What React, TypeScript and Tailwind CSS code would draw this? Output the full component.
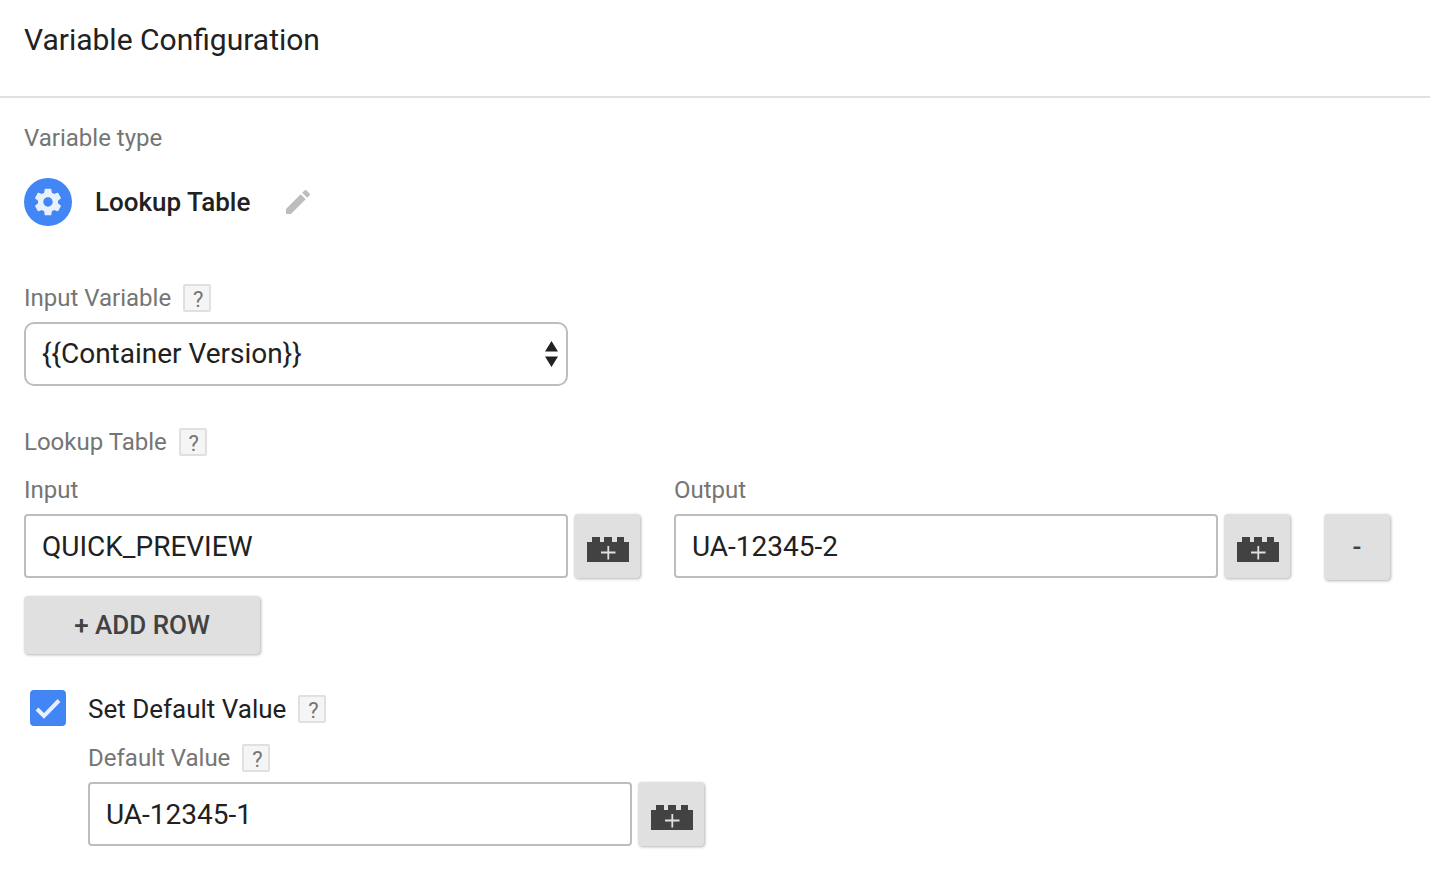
import { useState } from "react";

type Row = {
  id: number;
  input: string;
  output: string;
};

type TextFieldProperties = {
  id: string;
  value: string;
  label?: string;
  onChange: (value: string) => void;
};

const HelpBadge = ({ topic }: { topic: string }) => (
  <button
    type="button"
    aria-label={`Help: ${topic}`}
    className="flex h-7 w-7 shrink-0 items-center justify-center rounded-xs border-2 border-[#e0e0e0] bg-[#f5f5f5] pt-1 pl-0.5 text-[22px] leading-none text-[#757575]"
  >
    ?
  </button>
);

const BrickIcon = () => (
  <svg width="42" height="25" viewBox="0 0 42 25" aria-hidden="true">
    <path
      d="M0 5h5V0h8v5h4V0h8v5h5V0h7v5h5v20H0z"
      fill="#424242"
    />
    <path d="M21.300 9v13.500M14 15.500h14.500" stroke="#e0e0e0" strokeWidth="1.800" />
  </svg>
);

const TextField = ({ id, value, label, onChange }: TextFieldProperties) => (
  <div className="flex items-start gap-1.5">
    <input
      id={id}
      type="text"
      value={value}
      aria-label={label}
      onChange={(event) => onChange(event.target.value)}
      className="h-16 min-w-0 flex-1 rounded-sm border-2 border-[#bdbdbd] bg-white px-4 text-[28px] text-[#212121] outline-none focus:border-[#4285f4]"
    />
    <button
      type="button"
      aria-label="Insert variable"
      className="flex h-16 w-[66px] shrink-0 items-center justify-center rounded-sm bg-[#e0e0e0] pt-[7px] pl-0.5 shadow-[1px_1px_3px_rgba(0,0,0,0.3)]"
    >
      <BrickIcon />
    </button>
  </div>
);

const App = () => {
  const [variable, setVariable] = useState("container-version");
  const [rows, setRows] = useState<Row[]>([
    { id: 1, input: "QUICK_PREVIEW", output: "UA-12345-2" },
  ]);
  const [hasDefault, setHasDefault] = useState(true);
  const [defaultValue, setDefaultValue] = useState("UA-12345-1");

  const updateRow = (id: number, changes: Partial<Row>) => {
    setRows(rows.map((row) => (row.id === id ? { ...row, ...changes } : row)));
  };

  const addRow = () => {
    setRows([...rows, { id: Date.now(), input: "", output: "" }]);
  };

  return (
    <main className="min-h-screen bg-white font-['Roboto',sans-serif] text-[24px] leading-8 text-[#757575]">
      <header className="border-b-2 border-[#e0e0e0] px-6 pt-6 pb-10">
        <h1 className="text-[30px] leading-8 text-[#212121]">
          Variable Configuration
        </h1>
      </header>

      <div className="pt-6 pr-10 pb-6 pl-6">
        <h2>Variable type</h2>
        <div className="mt-6 flex items-center">
          <span className="flex h-12 w-12 items-center justify-center rounded-full bg-[#4285f4]">
            <svg width="32" height="32" viewBox="0 0 24 24" aria-hidden="true">
              <path
                d="M19.43 12.98c.04-.32.07-.64.07-.98s-.03-.66-.07-.98l2.11-1.65c.19-.15.24-.42.12-.64l-2-3.46c-.12-.22-.39-.3-.61-.22l-2.49 1c-.52-.4-1.08-.73-1.69-.98l-.38-2.65C14.46 2.18 14.25 2 14 2h-4c-.25 0-.46.18-.49.42l-.38 2.65c-.61.25-1.17.59-1.69.98l-2.49-1c-.23-.09-.49 0-.61.22l-2 3.46c-.13.22-.07.49.12.64l2.11 1.65c-.04.32-.07.65-.07.98s.03.66.07.98l-2.11 1.65c-.19.15-.24.42-.12.64l2 3.46c.12.22.39.3.61.22l2.49-1c.52.4 1.08.73 1.69.98l.38 2.65c.03.24.24.42.49.42h4c.25 0 .46-.18.49-.42l.38-2.65c.61-.25 1.17-.59 1.69-.98l2.49 1c.23.09.49 0 .61-.22l2-3.46c.12-.22.07-.49-.12-.64l-2.11-1.65zM12 15.5c-1.93 0-3.5-1.57-3.5-3.5s1.57-3.5 3.5-3.5 3.5 1.57 3.5 3.5-1.57 3.5-3.5 3.5z"
                fill="#e8f0fe"
              />
            </svg>
          </span>
          <span className="ml-[23px] text-[26px] font-medium text-[#212121]">
            Lookup Table
          </span>
          <button type="button" aria-label="Edit variable type" className="ml-8">
            <svg width="32" height="32" viewBox="0 0 24 24" aria-hidden="true">
              <path
                d="M3 17.25V21h3.75L17.81 9.94l-3.75-3.75L3 17.25zM20.71 7.04c.39-.39.39-1.02 0-1.41l-2.34-2.34c-.39-.39-1.02-.39-1.41 0l-1.83 1.83 3.75 3.75 1.83-1.83z"
                fill="#bdbdbd"
              />
            </svg>
          </button>
        </div>

        <div className="mt-14 flex items-center gap-3">
          <label htmlFor="input-variable">Input Variable</label>
          <HelpBadge topic="Input Variable" />
        </div>
        <div className="relative mt-2 w-full max-w-[544px]">
          <select
            id="input-variable"
            value={variable}
            onChange={(event) => setVariable(event.target.value)}
            className="h-16 w-full appearance-none rounded-[10px] border-2 border-[#bdbdbd] bg-white px-4 text-[28px] text-[#212121] outline-none focus:border-[#4285f4]"
          >
            <option value="container-version">{"{{Container Version}}"}</option>
          </select>
          <svg
            width="13"
            height="26"
            viewBox="0 0 13 26"
            aria-hidden="true"
            className="pointer-events-none absolute top-[19px] right-2.5"
          >
            <path d="M6.500 0L13 10.500H0zM0 15.500h13L6.500 26z" fill="#212121" />
          </svg>
        </div>

        <div className="mt-10 flex items-center gap-3">
          <h2>Lookup Table</h2>
          <HelpBadge topic="Lookup Table" />
        </div>
        <div className="mt-4 grid grid-cols-[1fr_1fr_66px] items-start gap-x-[34px] gap-y-2">
          <label htmlFor="input-1">Input</label>
          <label htmlFor="output-1" className="col-span-2">
            Output
          </label>
          {rows.map((row, index) => (
            <div
              key={row.id}
              className="col-span-3 grid grid-cols-subgrid items-start"
            >
              <TextField
                id={`input-${index + 1}`}
                label={index > 0 ? "Input" : undefined}
                value={row.input}
                onChange={(input) => updateRow(row.id, { input })}
              />
              <TextField
                id={`output-${index + 1}`}
                label={index > 0 ? "Output" : undefined}
                value={row.output}
                onChange={(output) => updateRow(row.id, { output })}
              />
              <button
                type="button"
                aria-label="Remove row"
                onClick={() => setRows(rows.filter(({ id }) => id !== row.id))}
                className="h-[66px] w-[66px] rounded-sm bg-[#e0e0e0] text-[26px] font-medium text-[#424242] shadow-[1px_1px_3px_rgba(0,0,0,0.3)]"
              >
                -
              </button>
            </div>
          ))}
        </div>
        <button
          type="button"
          onClick={addRow}
          className="mt-4 block h-[58px] w-[236px] rounded-sm bg-[#e0e0e0] text-[26px] font-medium text-[#424242] shadow-[1px_1px_3px_rgba(0,0,0,0.3)]"
        >
          + ADD ROW
        </button>

        <div className="mt-9 flex items-center">
          <span className="relative ml-1.5 h-9 w-9">
            <input
              id="set-default"
              type="checkbox"
              checked={hasDefault}
              onChange={(event) => setHasDefault(event.target.checked)}
              className="block h-9 w-9 appearance-none rounded-sm border-2 border-[#757575] checked:border-[#4285f4] checked:bg-[#4285f4]"
            />
            {hasDefault && (
              <svg
                viewBox="0 0 36 36"
                aria-hidden="true"
                className="pointer-events-none absolute inset-0"
              >
                <path
                  d="M7 19l7 7L29 10.500"
                  fill="none"
                  stroke="#e8f0fe"
                  strokeWidth="4"
                />
              </svg>
            )}
          </span>
          <div className="ml-[22px] flex items-center gap-3 pt-0.5">
            <label
              htmlFor="set-default"
              className="text-[26px] text-[#212121]"
            >
              Set Default Value
            </label>
            <HelpBadge topic="Set Default Value" />
          </div>
        </div>

        {hasDefault && (
          <div className="mt-4 ml-16 max-w-[616px]">
            <div className="mb-2 flex items-center gap-3">
              <label htmlFor="default-value">Default Value</label>
              <HelpBadge topic="Default Value" />
            </div>
            <TextField
              id="default-value"
              value={defaultValue}
              onChange={setDefaultValue}
            />
          </div>
        )}
      </div>
    </main>
  );
};

export default App;
